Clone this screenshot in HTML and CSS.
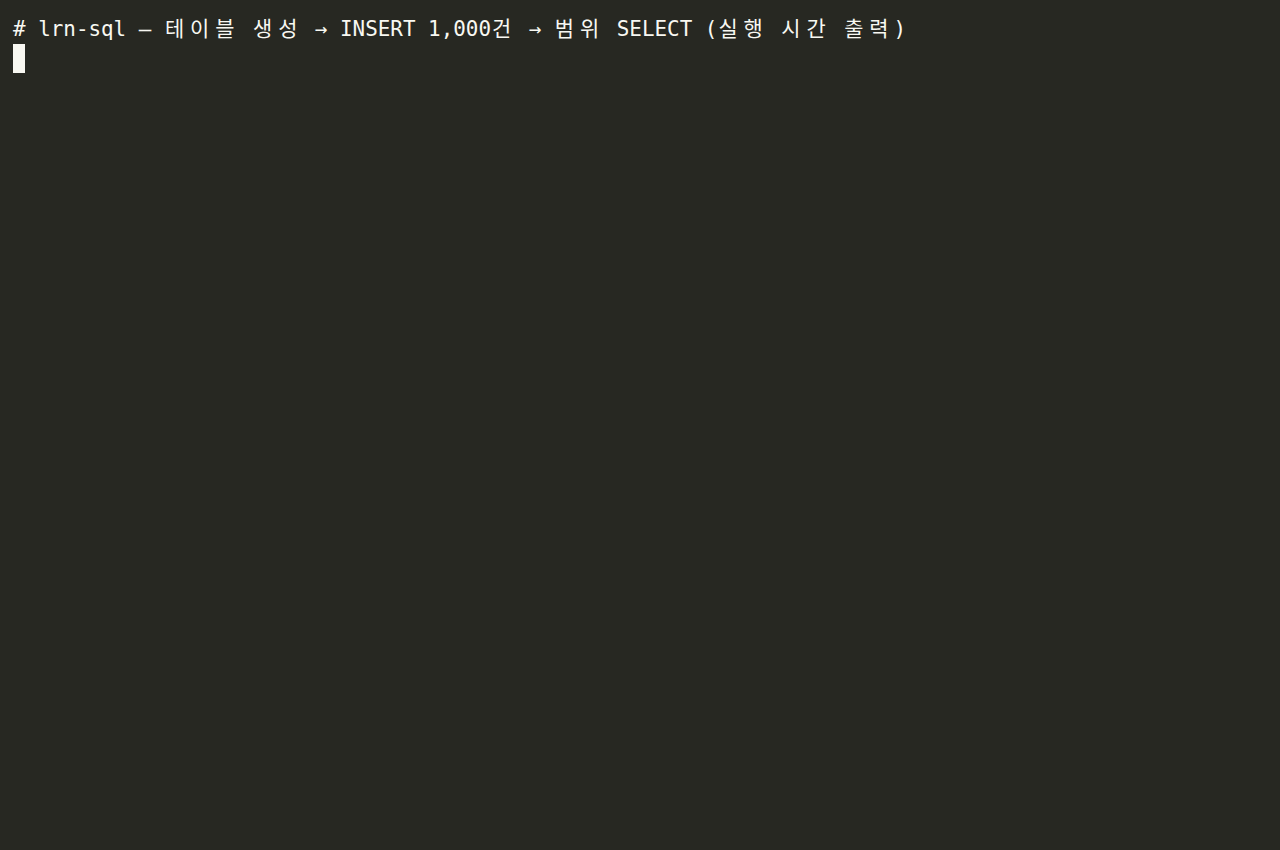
FILE: index.html
```html
<!DOCTYPE html>
<html lang="ko">
<head>
<meta charset="utf-8">
<title>lrn-sql</title>
<link rel="stylesheet" href="styles.css">
</head>
<body>
<div class="term">
  <div class="row text"># lrn-sql — <span class="w">테</span><span class="w">이</span><span class="w">블</span> <span class="w">생</span><span class="w">성</span> → INSERT 1,000<span class="w">건</span> → <span class="w">범</span><span class="w">위</span> SELECT (<span class="w">실</span><span class="w">행</span> <span class="w">시</span><span class="w">간</span> <span class="w">출</span><span class="w">력</span>)</div>
  <div class="row"><span class="cursor"></span></div>
</div>
</body>
</html>
```

FILE: styles.css
```css
html, body {
  margin: 0;
  padding: 0;
  background: #272822;
  height: 100%;
}
.term {
  box-sizing: border-box;
  height: 850px;
  padding: 15px 13px;
  background: #272822;
  color: #f8f8f2;
  font-family: "DejaVu Sans Mono", "Liberation Mono", "Noto Sans CJK KR", monospace;
  font-size: 20.9px;
  line-height: 29px;
}
.row {
  height: 29px;
  white-space: pre;
}
.row.text {
  line-height: 25px;
}
.w {
  display: inline-block;
  width: 25.16px;
  font-family: "Noto Sans CJK KR", sans-serif;
  font-weight: 400;
  padding-left: 1px;
  box-sizing: border-box;
}
.cursor {
  display: inline-block;
  width: 12px;
  height: 29px;
  background: #f8f8f2;
  vertical-align: top;
}
```
